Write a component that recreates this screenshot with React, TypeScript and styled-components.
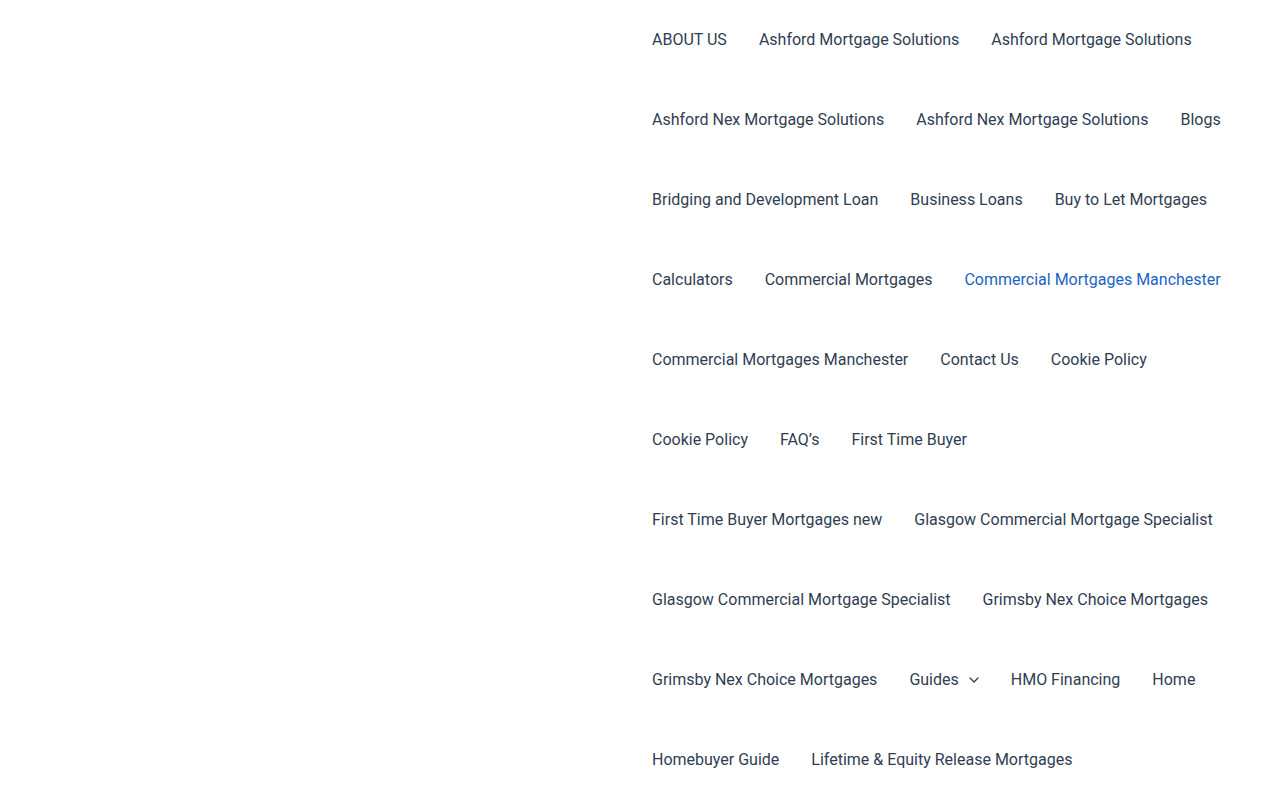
import React from "react";
import styled, { createGlobalStyle } from "styled-components";

const GlobalStyle = createGlobalStyle`
  html, body {
    margin: 0;
    padding: 0;
    background: #ffffff;
  }
  body {
    font-family: Roboto, "Liberation Sans", Arial, sans-serif;
  }
`;

const Header = styled.header`
  display: flex;
  justify-content: flex-end;
  padding-right: 40px;
`;

const Navigation = styled.nav`
  width: 604px;
`;

const Menu = styled.ul`
  display: flex;
  flex-wrap: wrap;
  list-style: none;
  margin: 0;
  padding: 0;
`;

const MenuItem = styled.li`
  display: flex;
`;

const MenuLink = styled.a<{ $current?: boolean }>`
  display: flex;
  align-items: center;
  padding: 0 16px;
  line-height: 80px;
  font-size: 16px;
  color: ${(p) => (p.$current ? "#1b64c2" : "#2f3e52")};
  text-decoration: none;
  white-space: nowrap;
  cursor: pointer;

  &:hover {
    color: #1b64c2;
  }
`;

const Toggle = styled.span`
  display: inline-flex;
  align-items: center;
  padding-left: 10px;
`;

interface Item {
  label: string;
  current?: boolean;
  dropdown?: boolean;
}

const items: Item[] = [
  { label: "ABOUT US" },
  { label: "Ashford Mortgage Solutions" },
  { label: "Ashford Mortgage Solutions" },
  { label: "Ashford Nex Mortgage Solutions" },
  { label: "Ashford Nex Mortgage Solutions" },
  { label: "Blogs" },
  { label: "Bridging and Development Loan" },
  { label: "Business Loans" },
  { label: "Buy to Let Mortgages" },
  { label: "Calculators" },
  { label: "Commercial Mortgages" },
  { label: "Commercial Mortgages Manchester", current: true },
  { label: "Commercial Mortgages Manchester" },
  { label: "Contact Us" },
  { label: "Cookie Policy" },
  { label: "Cookie Policy" },
  { label: "FAQ’s" },
  { label: "First Time Buyer" },
  { label: "First Time Buyer Mortgages new" },
  { label: "Glasgow Commercial Mortgage Specialist" },
  { label: "Glasgow Commercial Mortgage Specialist" },
  { label: "Grimsby Nex Choice Mortgages" },
  { label: "Grimsby Nex Choice Mortgages" },
  { label: "Guides", dropdown: true },
  { label: "HMO Financing" },
  { label: "Home" },
  { label: "Homebuyer Guide" },
  { label: "Lifetime & Equity Release Mortgages" },
];

function Chevron() {
  return (
    <svg width="10" height="6" viewBox="0 0 10 6" fill="none">
      <path
        d="M1 1L5 5L9 1"
        stroke="currentColor"
        strokeWidth="1.3"
        strokeLinecap="round"
        strokeLinejoin="round"
      />
    </svg>
  );
}

export default function App() {
  return (
    <>
      <GlobalStyle />
      <Header>
        <Navigation>
          <Menu>
            {items.map((item, i) => (
              <MenuItem key={i}>
                <MenuLink $current={item.current}>
                  {item.label}
                  {item.dropdown && (
                    <Toggle>
                      <Chevron />
                    </Toggle>
                  )}
                </MenuLink>
              </MenuItem>
            ))}
          </Menu>
        </Navigation>
      </Header>
    </>
  );
}
